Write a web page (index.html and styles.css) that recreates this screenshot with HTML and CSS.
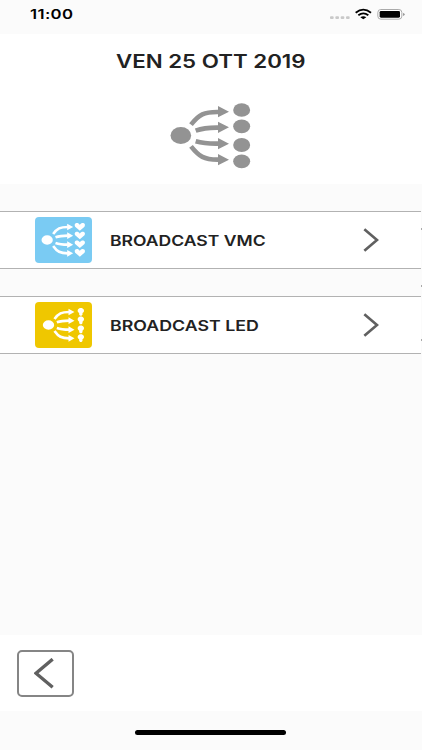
FILE: index.html
```
<!DOCTYPE html>
<html lang="it">
<head>
<meta charset="utf-8">
<title>Broadcast</title>
<link rel="stylesheet" href="styles.css">
</head>
<body>
<div class="screen">
  <div class="status">
    <span class="time">11:00</span>
    <svg class="indicators" viewBox="0 0 240 60">
      <g fill="#c9c9c9"><rect x="0" y="34" width="11" height="8" rx="3"/><rect x="16" y="34" width="11" height="8" rx="3"/><rect x="32" y="34" width="11" height="8" rx="3"/><rect x="48" y="34" width="11" height="8" rx="3"/></g>
      <g fill="none" stroke="#000" stroke-width="5.5"><path d="M77 23Q100 5 123 23"/><path d="M85 31Q100 19 115 31"/></g>
      <path d="M91 37Q100 30 109 37L100 43Z"/>
      <rect x="143.500" y="13.500" width="72" height="29" rx="9" fill="#fff" stroke="#aaa" stroke-width="3"/>
      <rect x="149" y="18" width="61" height="20" rx="4"/>
      <path d="M219 24Q224 25 224 28T219 33Z" fill="#999"/>
    </svg>
  </div>
  <header class="header">
    <h1 class="title">VEN 25 OTT 2019</h1>
    <svg class="hero" viewBox="0 0 300 270" fill="#939393">
      <ellipse cx="62.500" cy="136.500" rx="31" ry="25.500"/>
      <g fill="none" stroke="#939393" stroke-width="14"><path d="M93 104C117 73 132 65 177 66"/><path d="M107 122Q135 112 177 113"/><path d="M107 154Q135 162 177 161"/><path d="M93 169C117 199 132 210 177 209"/></g>
      <path d="M174 48L207 65L174 82ZM174 95L207 112L174 129ZM174 144L207 161L174 178ZM174 192L207 209L174 226Z"/>
      <ellipse cx="245" cy="60" rx="25.500" ry="20.500"/><ellipse cx="245" cy="109" rx="25.500" ry="20.500"/><ellipse cx="245" cy="165" rx="25.500" ry="21"/><ellipse cx="245" cy="214" rx="25.500" ry="20.500"/>
    </svg>
  </header>
  <main class="list">
    <div class="row">
      <svg class="tile vmc" viewBox="0 0 168 138" fill="#fff">
        <defs>
          <g id="fan">
            <ellipse cx="35" cy="69" rx="17" ry="14"/>
            <g fill="none" stroke="#fff" stroke-width="8"><path d="M53 51C65 34 74 30 97 30"/><path d="M60 61Q74 56 97 56"/><path d="M60 78Q74 83 97 83"/><path d="M53 87C65 104 74 109 97 109"/></g>
            <path d="M95 20L113 30L95 40ZM95 46L113 56L95 66ZM95 73L113 83L95 93ZM95 99L113 109L95 119Z"/>
          </g>
          <path id="heart" d="M0 11L-14 -1C-20 -12 -5 -16 0 -6C5 -16 20 -12 14 -1Z"/>
          <path id="bulb" d="M-5 10V5C-10 2 -10 -2 -9 -5C-6 -12 6 -12 9 -5C10 -2 10 2 5 5V10L2 13H-2Z"/>
        </defs>
        <use href="#fan"/>
        <use href="#heart" x="133" y="30"/><use href="#heart" x="133" y="56"/><use href="#heart" x="133" y="82"/><use href="#heart" x="133" y="108"/>
      </svg>
      <span class="label">BROADCAST VMC</span>
      <svg class="chevron" viewBox="0 0 48 72"><path d="M4 4L42 36L4 68"/></svg>
    </div>
    <div class="row">
      <svg class="tile led" viewBox="0 0 168 138" fill="#fff">
        <use href="#fan" x="4"/>
        <use href="#bulb" x="136" y="28"/><use href="#bulb" x="136" y="54"/><use href="#bulb" x="136" y="81"/><use href="#bulb" x="136" y="107"/>
      </svg>
      <span class="label led-label">BROADCAST LED</span>
      <svg class="chevron" viewBox="0 0 48 72"><path d="M4 4L42 36L4 68"/></svg>
    </div>
    <i class="tick t1"></i><i class="tick t2"></i><i class="tick t3"></i>
  </main>
  <footer class="footer">
    <button class="back" aria-label="Indietro"><svg viewBox="0 0 60 92"><path d="M56 3L6 45L56 87"/></svg></button>
  </footer>
  <div class="home"><div class="bar"></div></div>
</div>
</body>
</html>
```
FILE: styles.css
```
* { box-sizing: border-box; }
body { margin: 0; background: #fbfbfb; font-family: Inter, "Liberation Sans", sans-serif; color: #222; }
.screen { width: 422px; height: 750px; display: flex; flex-direction: column; overflow: hidden; }
.status { height: 34px; display: flex; justify-content: space-between; padding: 0 12px 0 30px; }
.time { font-size: 13.5px; line-height: 28px; font-weight: 600; letter-spacing: 0.3px; color: #000; transform: scaleX(1.24); transform-origin: left; }
.indicators { width: 80px; height: 20px; margin-top: 5px; }
.header { height: 150px; background: #fff; display: flex; flex-direction: column; align-items: center; }
.title { margin: 14px 0 0; font-size: 18.3px; line-height: 26px; font-weight: 600; white-space: nowrap; transform: scaleX(1.22); }
.hero { width: 100px; height: 90px; margin: 16px 2px 0 0; }
.list { position: relative; height: 451px; padding-top: 27px; }
.row { width: 421px; height: 58px; margin-bottom: 27px; display: flex; align-items: center; background: #fff; border: solid #b2b2b2; border-width: 1.500px 0; padding: 0 42px 0 35px; }
.tile { width: 57px; height: 46px; border-radius: 4px; }
.vmc { background: #7acbf3; }
.led { background: #efc700; }
.label { margin: 1px 0 0 18px; font-size: 14.5px; line-height: 20px; font-weight: 600; white-space: nowrap; transform: scaleX(1.21); transform-origin: left; }
.led-label { transform: scaleX(1.225); }
.chevron { width: 16px; height: 24px; margin-left: auto; fill: none; stroke: #606060; stroke-width: 8; }
.tick { position: absolute; right: 0; width: 1px; height: 2px; background: #aaa; }
.t1 { top: 44px; }
.t2 { top: 101px; }
.t3 { top: 155px; }
.footer { height: 76px; background: #fff; padding: 15px 17px; }
.back { display: flex; width: 57px; height: 47px; padding: 6px 0 0 15px; border: 2px solid #858585; border-radius: 5px; background: #fff; }
.back svg { width: 20px; height: 31px; fill: none; stroke: #606060; stroke-width: 10; }
.home { flex: 1; display: flex; justify-content: center; padding: 19px 1px 0 0; }
.bar { width: 151px; height: 5px; border-radius: 3px; background: #000; }
```
